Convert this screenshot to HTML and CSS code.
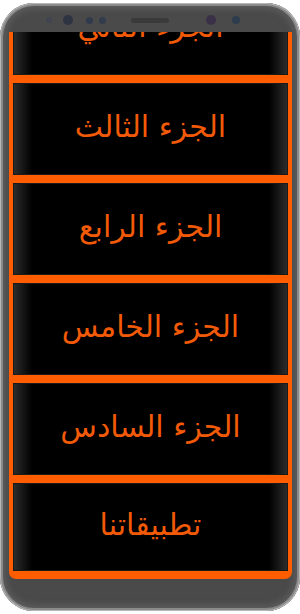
FILE: index.html
```html
<!DOCTYPE html>
<html lang="ar">
<head>
<meta charset="utf-8">
<title>الأجزاء</title>
<link rel="stylesheet" href="styles.css">
</head>
<body>
<div class="phone">
  <div class="bezel-top">
    <span class="dot d1"></span>
    <span class="dot d2"></span>
    <span class="dot d3"></span>
    <span class="dot d4"></span>
    <span class="slit"></span>
    <span class="dot d5"></span>
    <span class="dot d6"></span>
  </div>
  <div class="screen">
    <div class="list" dir="rtl">
      <div class="item">الجزء الثاني</div>
      <div class="item">الجزء الثالث</div>
      <div class="item">الجزء الرابع</div>
      <div class="item">الجزء الخامس</div>
      <div class="item">الجزء السادس</div>
      <div class="item last">تطبيقاتنا</div>
    </div>
  </div>
</div>
</body>
</html>
```
FILE: styles.css
```css
html, body {
  margin: 0;
  padding: 0;
  background: #ffffff;
}
.phone {
  width: 300px;
  height: 608px;
  margin-top: 3px;
  box-sizing: border-box;
  border-radius: 34px;
  background: #4a4a4a;
  box-shadow: inset 0 0 0 1px #b8b8b8, inset 0 0 0 3px #8a8a8a, inset 0 0 6px 6px #5c5c5c;
  display: flex;
  flex-direction: column;
  overflow: hidden;
}
.bezel-top {
  height: 29px;
  padding-top: 5px;
  box-sizing: border-box;
  display: flex;
  align-items: center;
  flex: none;
}
.dot {
  border-radius: 50%;
  background: #30343f;
  flex: none;
}
.d1 { width: 6px; height: 6px; margin-left: 46px; background: #414550; }
.d2 { width: 10px; height: 10px; margin-left: 11px; background: #2f3442; }
.d3 { width: 7px; height: 7px; margin-left: 13px; background: #2f3a4c; }
.d4 { width: 7px; height: 7px; margin-left: 6px; background: #323c4c; }
.slit {
  width: 38px;
  height: 5px;
  margin-left: 25px;
  border-radius: 3px;
  background: #3a3a3a;
  flex: none;
}
.d5 { width: 10px; height: 10px; margin-left: 37px; background: #3a3048; }
.d6 { width: 8px; height: 8px; margin-left: 16px; background: #2e3d4e; }
.screen {
  margin: 0 8px 0 9px;
  height: 547px;
  flex: none;
  background: #ff5d00;
  padding: 0 4px;
  box-sizing: border-box;
  border-radius: 0 0 7px 7px;
  overflow: hidden;
}
.list {
  display: flex;
  flex-direction: column;
  gap: 8px;
  margin-top: -49px;
}
.item {
  height: 92px;
  padding-bottom: 6px;
  box-sizing: border-box;
  flex: none;
  display: flex;
  align-items: center;
  justify-content: center;
  background: linear-gradient(to right, #2e2e2e 0%, #000 7%, #000 93%, #2e2e2e 100%);
  color: #f25a08;
  font-family: "DejaVu Sans", sans-serif;
  font-size: 30px;
  box-shadow: inset 0 0 0 1px #1a1a1a;
}
.item.last {
  height: 88px;
}
```
